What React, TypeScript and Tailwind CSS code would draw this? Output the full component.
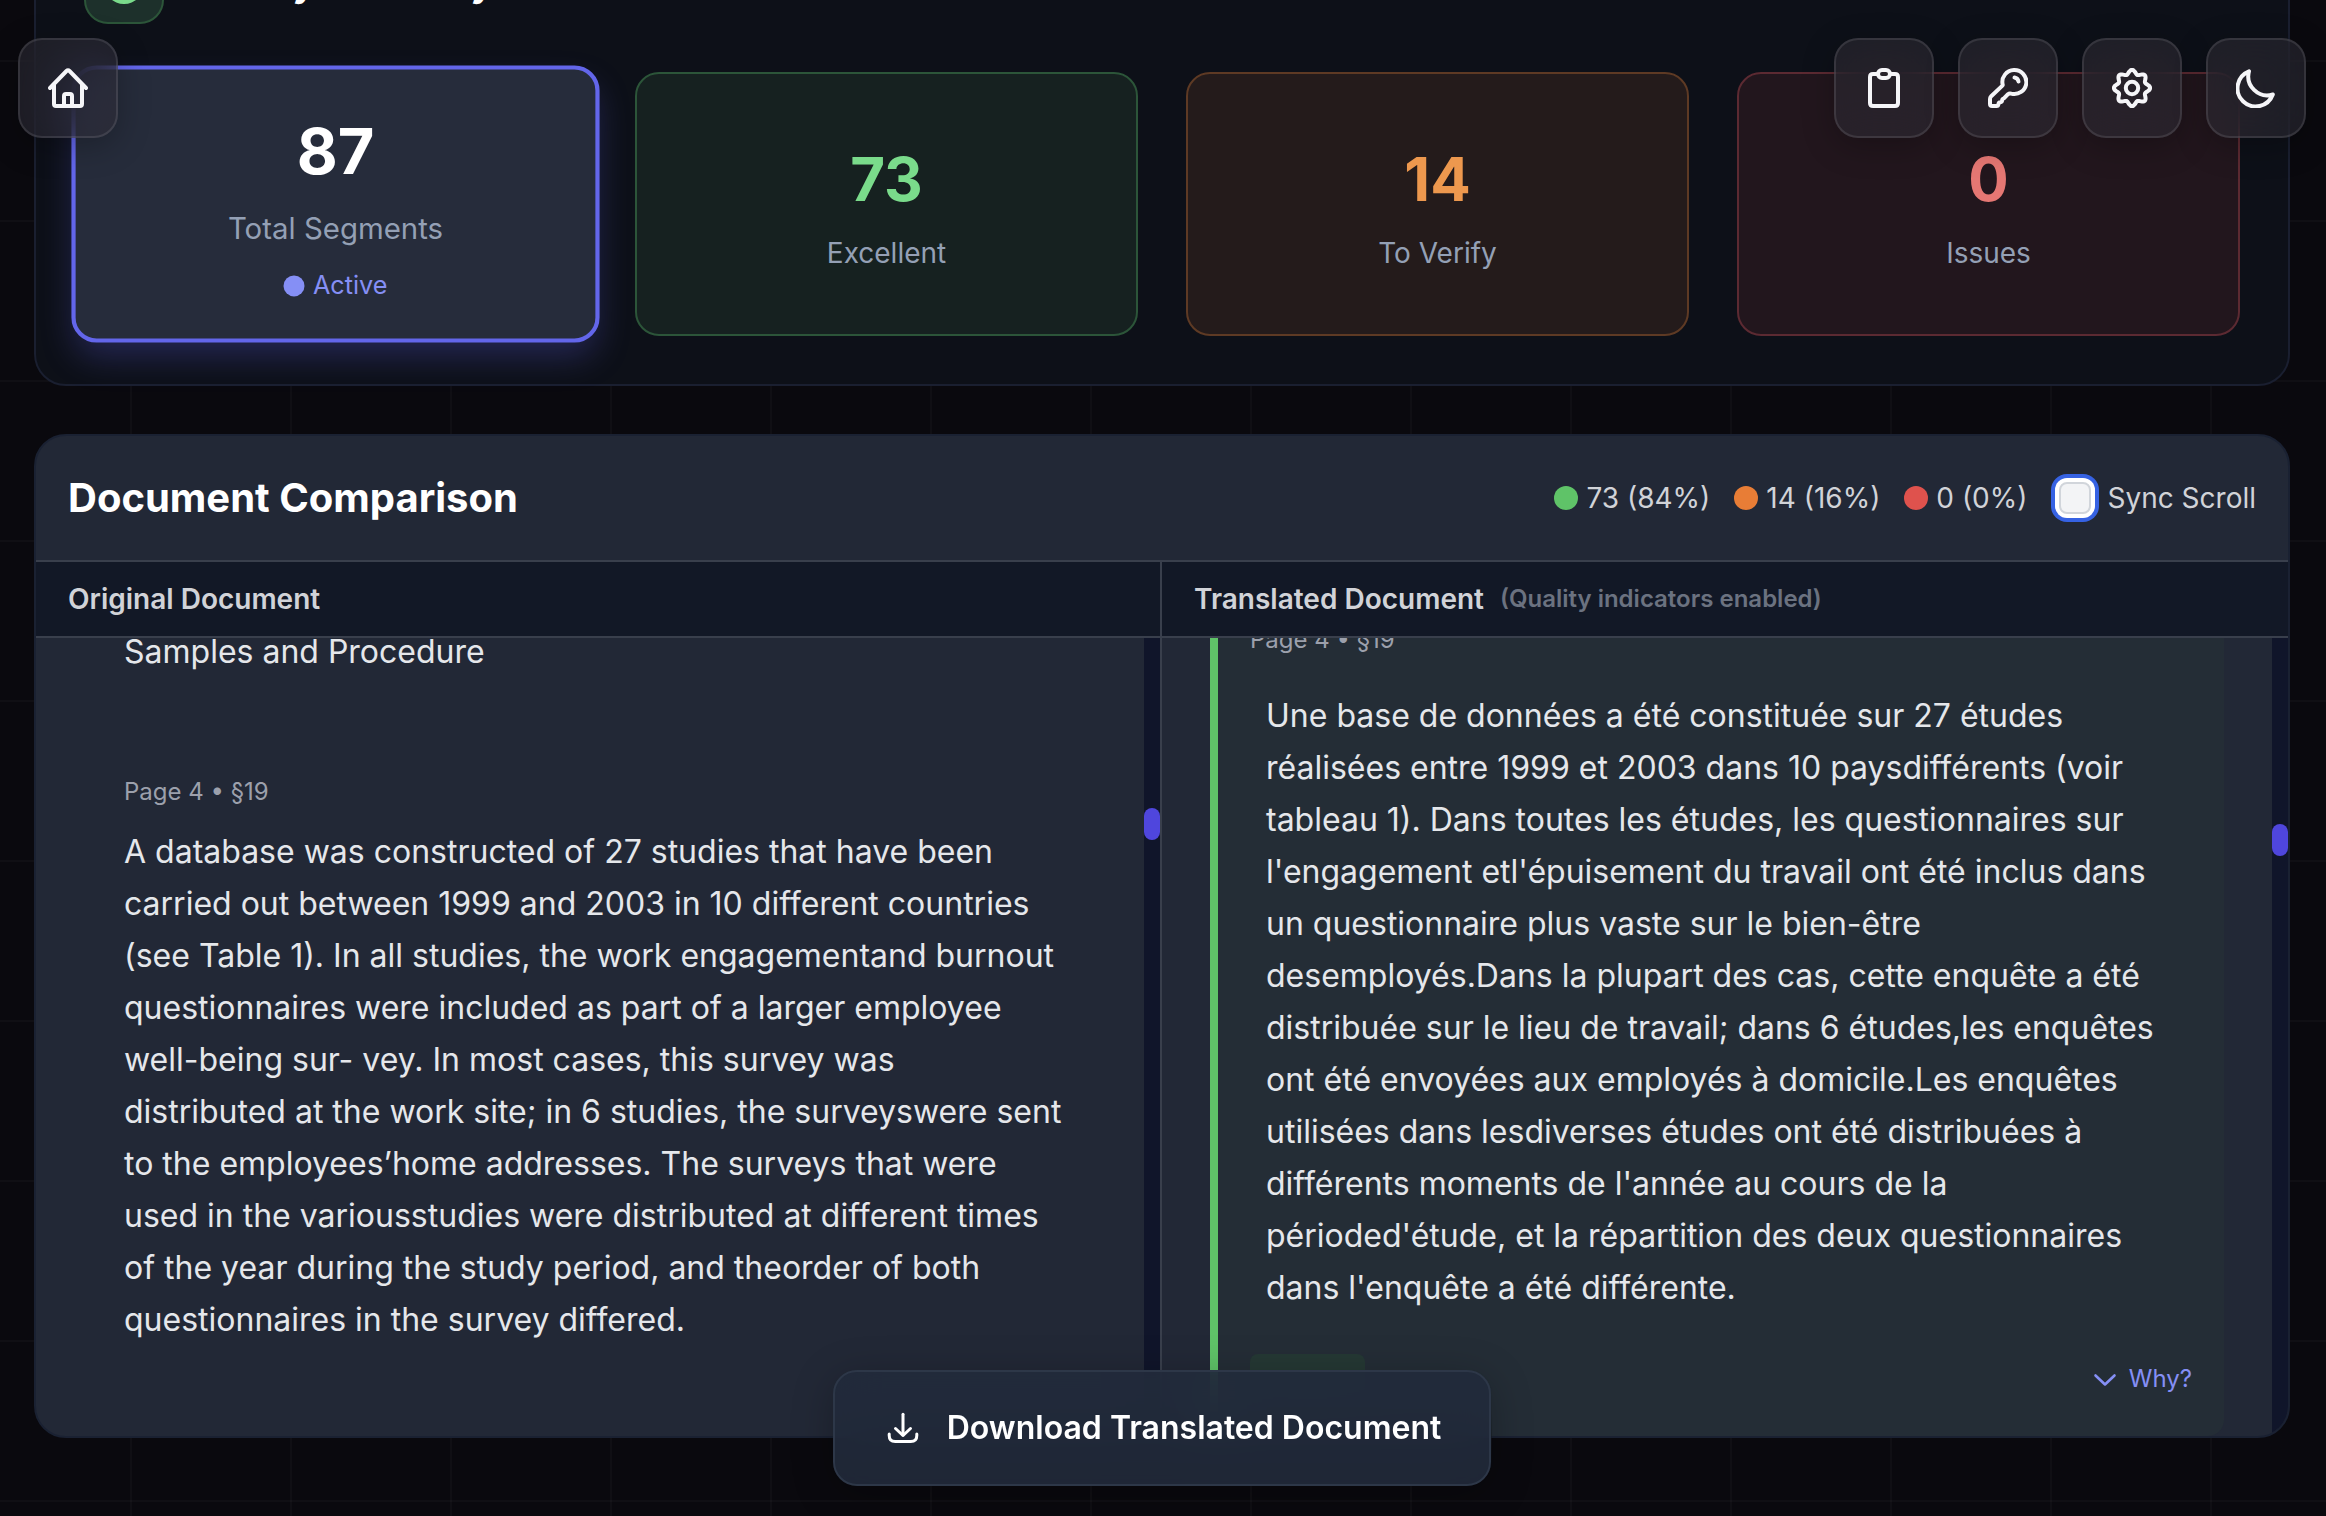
import { useState, type ReactNode } from 'react';

const stats = [
  { value: 87, label: 'Total Segments', box: 'border-4 border-[#6366ea] bg-[#262c3b] scale-105 shadow-[0_16px_32px_-4px_rgba(99,102,241,0.28)]', text: 'text-white' },
  { value: 73, label: 'Excellent', box: 'border-2 border-[#2c5539] bg-[#162120]', text: 'text-[#7adb8b]' },
  { value: 14, label: 'To Verify', box: 'border-2 border-[#5e3a24] bg-[#241b1b]', text: 'text-[#ed984e]' },
  { value: 0, label: 'Issues', box: 'border-2 border-[#5c2a32] bg-[#22161d]', text: 'text-[#e57773]' },
];

const legend = [
  { label: '73 (84%)', dot: 'bg-[#5fc368]' },
  { label: '14 (16%)', dot: 'bg-[#e87d36]' },
  { label: '0 (0%)', dot: 'bg-[#df524d]' },
];

const originalText =
  'A database was constructed of 27 studies that have been carried out between 1999 and 2003 in 10 different countries (see Table 1). In all studies, the work engagementand burnout questionnaires were included as part of a larger employee well-being sur- vey. In most cases, this survey was distributed at the work site; in 6 studies, the surveyswere sent to the employees’home addresses. The surveys that were used in the variousstudies were distributed at different times of the year during the study period, and theorder of both questionnaires in the survey differed.';

const translatedText =
  "Une base de données a été constituée sur 27 études réalisées entre 1999 et 2003 dans 10 paysdifférents (voir tableau 1). Dans toutes les études, les questionnaires sur l'engagement etl'épuisement du travail ont été inclus dans un questionnaire plus vaste sur le bien-être desemployés.Dans la plupart des cas, cette enquête a été distribuée sur le lieu de travail; dans 6 études,les enquêtes ont été envoyées aux employés à domicile.Les enquêtes utilisées dans lesdiverses études ont été distribuées à différents moments de l'année au cours de la périoded'étude, et la répartition des deux questionnaires dans l'enquête a été différente.";

// Eight-lobed outline of the settings gear
const gearPath =
  Array.from({ length: 128 }, (_, i) => {
    const a = (i / 128) * Math.PI * 2;
    const r = 16.1 + 2 * Math.cos(8 * a);
    return `${i === 0 ? 'M' : 'L'}${(20 + r * Math.sin(a)).toFixed(2)} ${(20 - r * Math.cos(a)).toFixed(2)}`;
  }).join(' ') + 'Z';

function Icon({ children, stroke = 4 }: { children: ReactNode; stroke?: number }) {
  return (
    <svg className="size-10 shrink-0" viewBox="0 0 40 40" fill="none" stroke="currentColor" strokeWidth={stroke} strokeLinecap="round" strokeLinejoin="round" aria-hidden="true">
      {children}
    </svg>
  );
}

function FloatingButton({ label, children }: { label: string; children: ReactNode }) {
  return (
    <button
      type="button"
      aria-label={label}
      className="flex size-[100px] items-center justify-center rounded-3xl border-2 border-white/10 bg-[#2d2b35]/55 text-[#f5f5f8] shadow-[0_8px_32px_rgba(0,0,0,0.25)] backdrop-blur-xl"
    >
      {children}
    </button>
  );
}

function ScrollTrack({ thumb }: { thumb: string }) {
  return (
    <div className="w-4 shrink-0 bg-[#10152a]">
      <div className={`h-8 rounded-full bg-[#4f46dd] ${thumb}`} />
    </div>
  );
}

export default function App() {
  const [syncScroll, setSyncScroll] = useState(false);

  return (
    <div
      className="flex min-h-screen w-full flex-col overflow-hidden bg-[#0a090e] bg-[linear-gradient(to_right,rgba(255,255,255,0.025)_2px,transparent_2px),linear-gradient(to_bottom,rgba(255,255,255,0.025)_2px,transparent_2px)] bg-[size:160px_160px] bg-[position:130px_60px] font-['Inter',sans-serif] text-[28px] leading-[42px]"
    >
      {/* Floating navigation */}
      <nav className="fixed top-[38px] left-[18px] z-20">
        <FloatingButton label="Home">
          <Icon>
            <path d="M2 20 18.5 3q1.5-1.5 3 0L38 20" />
            <path d="M6 17v19q0 2 2 2h24q2 0 2-2V17" />
            <path d="M16 38V28q0-2 2-2h4q2 0 2 2v10" />
          </Icon>
        </FloatingButton>
      </nav>
      <nav className="fixed top-[38px] right-5 z-20 flex gap-6">
        <FloatingButton label="History">
          <Icon>
            <path d="M13 6H9Q6 6 6 9v26q0 3 3 3h22q3 0 3-3V9q0-3-3-3h-4" />
            <rect x="14" y="2" width="12" height="8" rx="4" />
          </Icon>
        </FloatingButton>
        <FloatingButton label="API key">
          <Icon>
            <path d="M14.4 17.6 3.2 28.2Q2 29.4 2 31v5q0 2 2 2h4.5q1.7 0 1.9-1.8.2-1.9 2-2 1.6-.2 1.7-1.8.2-1.7 1.8-2L20 26.2q1.4-1.2 3.2-.6A12 12 0 1 0 14.6 16.4q.3.7-.2 1.2Z" />
            <path d="M26.5 9.5a5 5 0 0 1 4 4" />
          </Icon>
        </FloatingButton>
        <FloatingButton label="Settings">
          <Icon>
            <path d={gearPath} />
            <circle cx="20" cy="20" r="6.2" />
          </Icon>
        </FloatingButton>
        <FloatingButton label="Toggle theme">
          <Icon>
            <path d="M13 3.3A18.2 18.2 0 1 0 36.8 26.5 19 19 0 0 1 13 3.3Z" />
          </Icon>
        </FloatingButton>
      </nav>

      <main className="-mt-[106px] flex flex-1 flex-col gap-12 pr-9 pl-[34px]">
        {/* Quality summary */}
        <section className="rounded-[32px] border-2 border-[#1a1f30] bg-[#0d1018] p-12">
          <header className="mb-12 flex items-center gap-6">
            <div className="flex size-20 items-center justify-center rounded-3xl border-2 border-[#2c5539] bg-[#1d302b] text-[#7adb8b]">
              <svg className="size-10" viewBox="0 0 40 40" fill="currentColor" aria-hidden="true">
                <path fillRule="evenodd" d="M20 0a20 20 0 1 1 0 40 20 20 0 0 1 0-40Zm8.6 16.2-2.8-2.8L17 22.2l-3.8-3.8-2.8 2.8 6.6 6.6Z" />
              </svg>
            </div>
            <h2 className="text-4xl font-bold text-white">Quality Summary</h2>
          </header>
          <div className="grid grid-cols-4 gap-12">
            {stats.map((stat, i) => (
              <button key={stat.label} type="button" aria-pressed={i === 0} className={`flex flex-col items-center justify-center rounded-3xl p-8 ${stat.box}`}>
                <span className={`mb-2 text-[60px] leading-[90px] font-bold ${stat.text}`}>{stat.value}</span>
                <span className="text-[#94a0b5]">{stat.label}</span>
                {i === 0 && (
                  <span className="mt-4 flex items-center gap-2 text-2xl leading-9 text-[#858ff5]">
                    <span className="size-5 rounded-full bg-current" />
                    Active
                  </span>
                )}
              </button>
            ))}
          </div>
        </section>

        {/* Side by side documents */}
        <section className="overflow-hidden rounded-[32px] border-2 border-[#1a2132] bg-[#222836] text-[#d1d3d8]">
          <header className="flex items-center justify-between border-b-2 border-[#393f4c] p-8">
            <h2 className="text-[40px] leading-[60px] font-bold text-white">Document Comparison</h2>
            <div className="flex items-center gap-8">
              <ul className="flex gap-6">
                {legend.map((item) => (
                  <li key={item.label} className="flex items-center gap-2">
                    <span className={`size-6 rounded-full ${item.dot}`} />
                    {item.label}
                  </li>
                ))}
              </ul>
              <label className="flex items-center gap-4">
                <input
                  type="checkbox"
                  checked={syncScroll}
                  onChange={(e) => setSyncScroll(e.target.checked)}
                  className="size-8 appearance-none rounded-lg border-2 border-[#d1d5db] bg-[#f3f4f6] ring-4 ring-[#3662e3] ring-offset-4 ring-offset-white checked:bg-[#3662e3]"
                />
                Sync Scroll
              </label>
            </div>
          </header>

          <div className="grid grid-cols-2 text-[#e5e7eb]">
            <div className="flex flex-col border-r-2 border-[#393f4c]">
              <h3 className="border-b-2 border-[#393f4c] bg-[#121826] px-8 py-4 font-semibold text-[#d1d3d8]">Original Document</h3>
              <div className="flex flex-1 overflow-hidden">
                <div className="flex-1 px-12 text-[32px] leading-[52px]">
                  <div className="-mt-11 mb-8 border-l-8 border-transparent p-8">
                    <p>Samples and Procedure</p>
                  </div>
                  <div className="border-l-8 border-transparent p-8">
                    <div className="mb-4 text-2xl leading-9 text-[#9ca0ac]">Page 4 • §19</div>
                    <p>{originalText}</p>
                  </div>
                </div>
                <ScrollTrack thumb="mt-[170px]" />
              </div>
            </div>

            <div className="flex flex-col">
              <h3 className="flex items-center gap-4 border-b-2 border-[#393f4c] bg-[#121826] px-8 py-4 font-semibold text-[#d1d3d8]">
                Translated Document
                <span className="text-2xl text-[#6b7280]">(Quality indicators enabled)</span>
              </h3>
              <div className="flex flex-1 overflow-hidden">
                <div className="flex-1 px-12 text-[32px] leading-[52px]">
                  <div className="-mt-12 rounded-2xl border-l-8 border-[#5fc368] bg-[#242d36] p-8">
                    <div className="mb-4 text-2xl leading-9 text-[#9ca0ac]">Page 4 • §19</div>
                    <p className="p-4">{translatedText}</p>
                    <div className="mt-6 flex h-[50px] items-center justify-between">
                      <div className="h-full w-[115px] rounded-lg bg-[#253834]" />
                      <button type="button" className="flex items-center gap-2 text-2xl leading-9 text-[#858ff5]">
                        <svg className="size-8" viewBox="0 0 32 32" fill="none" stroke="currentColor" strokeWidth="2.6" strokeLinecap="round" strokeLinejoin="round" aria-hidden="true">
                          <path d="m6.5 12.5 9.5 9 9.5-9" />
                        </svg>
                        Why?
                      </button>
                    </div>
                  </div>
                </div>
                <ScrollTrack thumb="mt-[186px]" />
              </div>
            </div>
          </div>
        </section>
      </main>

      {/* Download action */}
      <div className="fixed inset-x-0 bottom-[30px] z-20 flex justify-center pr-0.5">
        <button
          type="button"
          className="flex items-center gap-6 rounded-3xl border-2 border-[#2d3748] bg-[#212a3b]/90 px-12 py-8 text-[32px] leading-[48px] font-semibold text-white shadow-[0_8px_40px_rgba(0,0,0,0.25)] backdrop-blur-xl"
        >
          <Icon stroke={3}>
            <path d="M20 6.2V27" />
            <path d="m12.5 20.5 7.5 7 7.5-7" />
            <path d="M6.2 26v1.5q0 6 6 6h15.6q6 0 6-6V26" />
          </Icon>
          Download Translated Document
        </button>
      </div>
    </div>
  );
}
